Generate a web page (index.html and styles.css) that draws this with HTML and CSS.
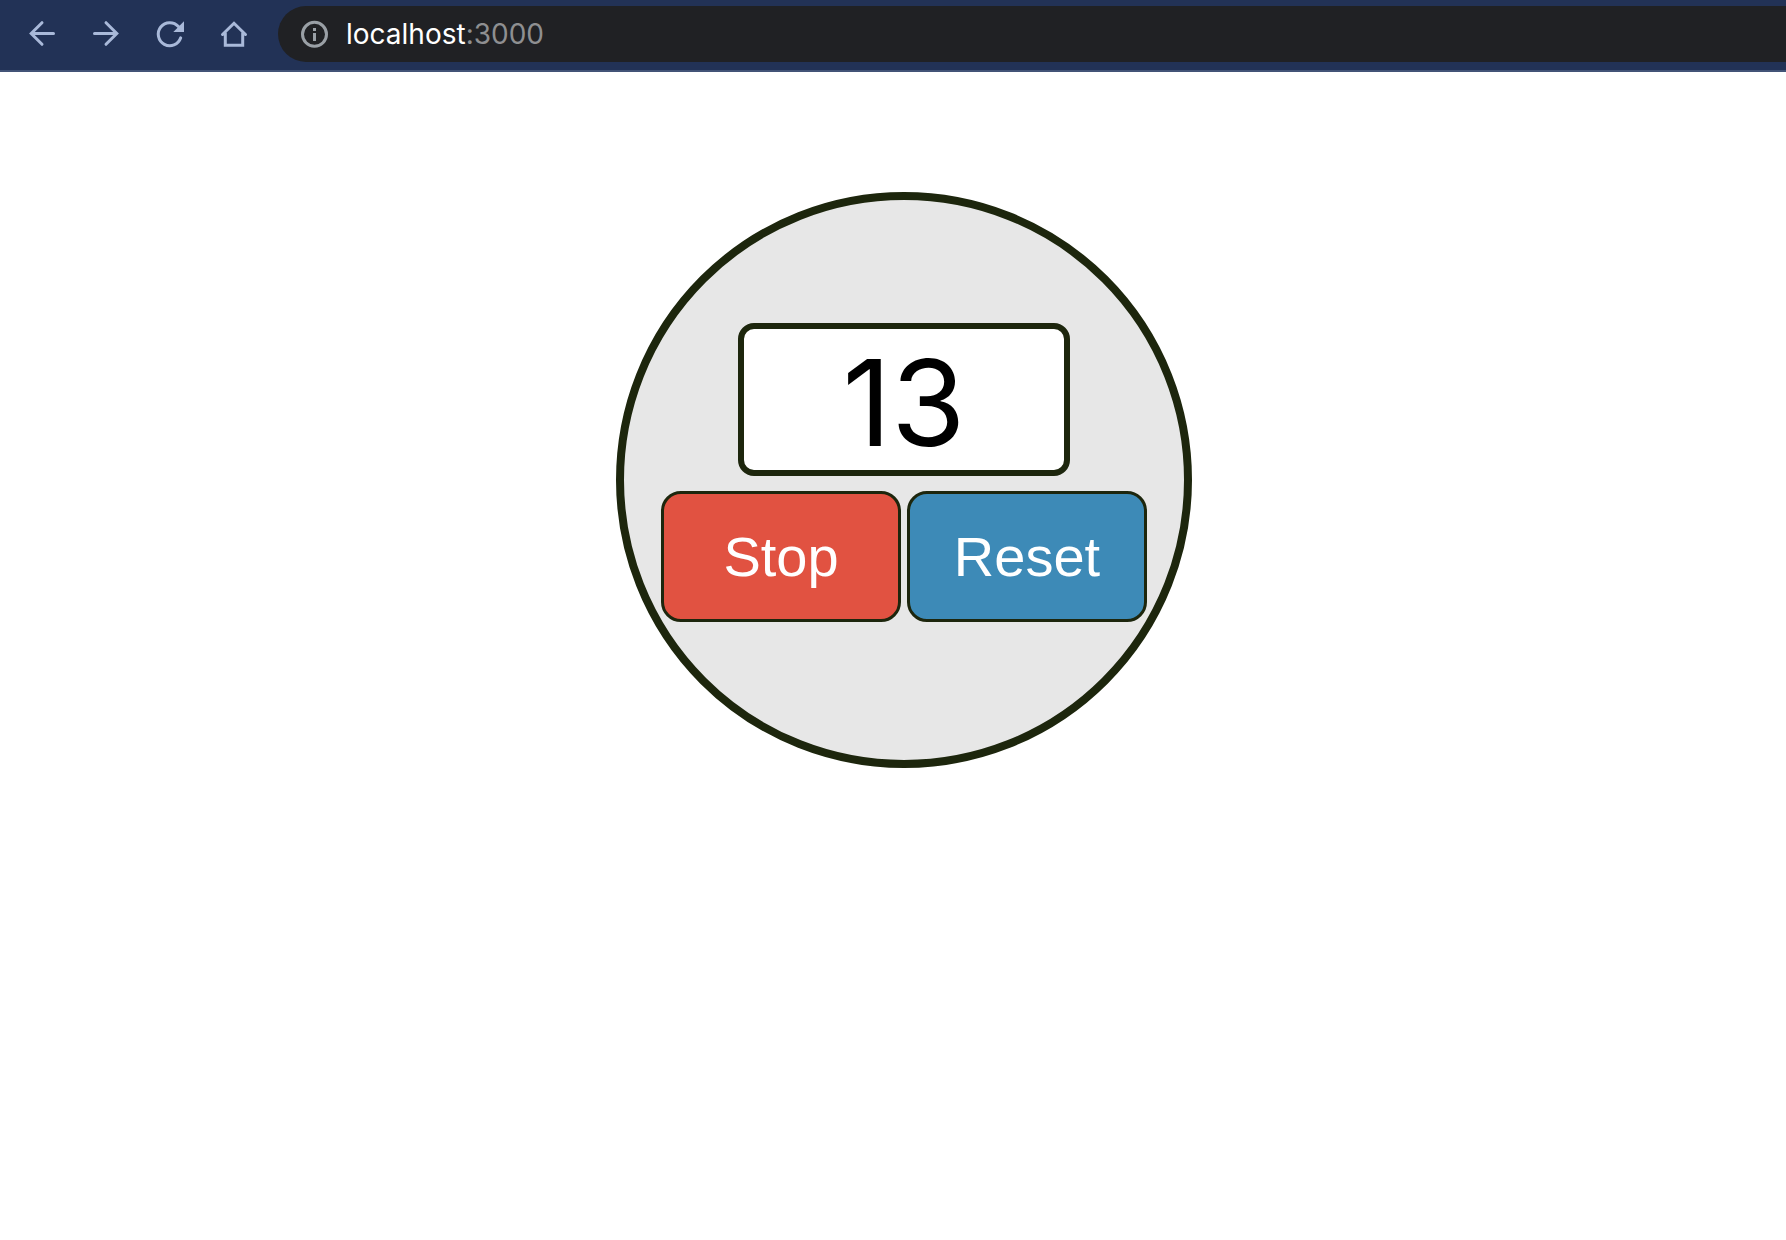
FILE: index.html
```html
<!DOCTYPE html>
<html lang="en">
<head>
<meta charset="utf-8">
<title>Timer</title>
<link rel="stylesheet" href="styles.css">
</head>
<body>
<header class="toolbar">
  <nav class="nav" aria-label="Browser">
    <button class="nav-button" type="button" aria-label="Back">
      <svg class="icon" viewBox="0 0 32 32"><path d="M27.5 15.5H6M16 4.7L5.2 15.5L16 26.3" /></svg>
    </button>
    <button class="nav-button" type="button" aria-label="Forward">
      <svg class="icon" viewBox="0 0 32 32"><path d="M4.5 15.5H26M16 4.7L26.8 15.5L16 26.3" /></svg>
    </button>
    <button class="nav-button" type="button" aria-label="Reload">
      <svg class="icon" viewBox="0 0 32 32"><path d="M26.7 19.8A11.5 11.5 0 1 1 24.4 8.6" /><path class="solid" d="M30 3.3V14H19.3z" /></svg>
    </button>
    <button class="nav-button" type="button" aria-label="Home">
      <svg class="icon" viewBox="0 0 32 32"><path d="M4.5 16.5L16 5.3L27.5 16.5M7.3 15V27.2H24.7V15" /></svg>
    </button>
  </nav>
  <div class="address">
    <button class="nav-button info" type="button" aria-label="Site information">
      <svg class="icon" viewBox="0 0 32 32"><circle cx="16.5" cy="16.3" r="12" /><path class="solid" d="M15 10h3v3h-3zM15 15h3v8h-3z" /></svg>
    </button>
    <a class="url" href="http://localhost:3000">localhost<span class="port">:3000</span></a>
  </div>
</header>
<main class="page">
  <section class="timer">
    <output class="display">13</output>
    <div class="controls">
      <button class="control stop" type="button">Stop</button>
      <button class="control reset" type="button">Reset</button>
    </div>
  </section>
</main>
</body>
</html>
```
FILE: styles.css
```css
* {
  box-sizing: border-box;
}

body {
  margin: 0;
  background: #fff;
}

button {
  margin: 0;
  padding: 0;
  cursor: pointer;
}

.toolbar {
  display: flex;
  align-items: flex-start;
  height: 72px;
  padding: 6px 0 0 26px;
  border-bottom: 2px solid #435377;
  background: #223256;
}

.nav {
  display: flex;
  align-items: center;
  gap: 32px;
  height: 56px;
}

.nav-button {
  display: flex;
  width: 32px;
  height: 32px;
  border: 0;
  background: none;
  color: #a9b9d9;
}

.icon {
  width: 32px;
  height: 32px;
  fill: none;
  stroke: currentColor;
  stroke-width: 3;
  stroke-linecap: round;
}

.icon .solid {
  fill: currentColor;
  stroke: none;
}

.address {
  display: flex;
  flex: 1;
  align-items: center;
  gap: 16px;
  height: 56px;
  margin-left: 28px;
  padding-left: 20px;
  border-radius: 28px 0 0 28px;
  background: #202124;
}

.info {
  color: #9aa0a6;
}

.url {
  color: #fff;
  font: 28px/32px Inter, sans-serif;
  text-decoration: none;
}

.port {
  color: #8e8f91;
}

.page {
  display: flex;
  justify-content: center;
  padding: 120px 0 0 22px;
}

.timer {
  display: flex;
  flex-direction: column;
  align-items: center;
  justify-content: center;
  gap: 15px;
  width: 576px;
  aspect-ratio: 1;
  padding-bottom: 15px;
  border: 8px solid #1d260d;
  border-radius: 50%;
  background: #e7e7e7;
}

.display {
  width: 332px;
  padding-top: 6px;
  border: 6px solid #1d260d;
  border-radius: 16px;
  background: #fff;
  color: #000;
  font: 120px/135px Inter, sans-serif;
  text-align: center;
}

.controls {
  display: flex;
  gap: 6px;
}

.control {
  width: 240px;
  height: 131px;
  border: 3px solid #1d260d;
  border-radius: 20px;
  color: #fff;
  font: 56px/64px "Liberation Sans", Arial, sans-serif;
}

.stop {
  background: #e15241;
}

.reset {
  background: #3d8ab7;
}
```
